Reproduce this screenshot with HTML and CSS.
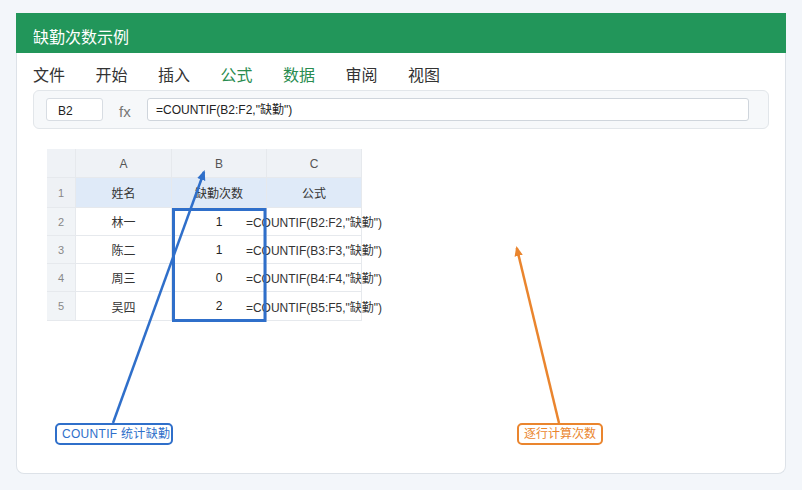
FILE: index.html
```html
<!DOCTYPE html>
<html lang="zh">
<head>
<meta charset="utf-8">
<title>缺勤次数示例</title>
<link rel="stylesheet" href="styles.css">
</head>
<body>
<div class="card">
  <div class="title">缺勤次数示例</div>
  <div class="menu">
    <span class="mi">文件</span>
    <span class="mi">开始</span>
    <span class="mi">插入</span>
    <span class="mi green">公式</span>
    <span class="mi green">数据</span>
    <span class="mi">审阅</span>
    <span class="mi">视图</span>
  </div>
  <div class="fbar">
    <div class="namebox">B2</div>
    <div class="fx">fx</div>
    <div class="finput">=COUNTIF(B2:F2,"缺勤")</div>
  </div>
  <div class="sheet">
    <div class="c corner"></div>
    <div class="c colh">A</div>
    <div class="c colh">B</div>
    <div class="c colh">C</div>

    <div class="c rowh r1">1</div>
    <div class="c hd">姓名</div>
    <div class="c hd">缺勤次数</div>
    <div class="c hd">公式</div>

    <div class="c rowh">2</div>
    <div class="c">林一</div>
    <div class="c num">1</div>
    <div class="c"><span class="nw">=COUNTIF(B2:F2,"缺勤")</span></div>

    <div class="c rowh">3</div>
    <div class="c">陈二</div>
    <div class="c num">1</div>
    <div class="c"><span class="nw">=COUNTIF(B3:F3,"缺勤")</span></div>

    <div class="c rowh">4</div>
    <div class="c">周三</div>
    <div class="c num">0</div>
    <div class="c"><span class="nw">=COUNTIF(B4:F4,"缺勤")</span></div>

    <div class="c rowh">5</div>
    <div class="c">吴四</div>
    <div class="c num">2</div>
    <div class="c"><span class="nw">=COUNTIF(B5:F5,"缺勤")</span></div>
  </div>
</div>

<svg class="overlay" width="802" height="490" viewBox="0 0 802 490">
  <defs>
    <marker id="ab" markerWidth="10" markerHeight="10" refX="8" refY="5" orient="auto" markerUnits="userSpaceOnUse">
      <path d="M0,0.8 L10,5 L0,9.2 Z" fill="#2f6fca"/>
    </marker>
    <marker id="ao" markerWidth="10" markerHeight="10" refX="8" refY="5" orient="auto" markerUnits="userSpaceOnUse">
      <path d="M0,0.8 L10,5 L0,9.2 Z" fill="#ea852e"/>
    </marker>
  </defs>
  <rect x="173.5" y="209.5" width="91.5" height="111" fill="none" stroke="#2f6fca" stroke-width="3"/>
  <line x1="113" y1="423" x2="204" y2="172" stroke="#2f6fca" stroke-width="2.5" marker-end="url(#ab)"/>
  <line x1="559" y1="423" x2="516.8" y2="248" stroke="#ea852e" stroke-width="2.5" marker-end="url(#ao)"/>
</svg>

<div class="callout blue">COUNTIF 统计缺勤</div>
<div class="callout orange">逐行计算次数</div>
</body>
</html>
```

FILE: styles.css
```css
* { box-sizing: border-box; }
html, body { margin: 0; padding: 0; }
body {
  position: relative;
  width: 802px;
  height: 490px;
  background: #f3f6fa;
  font-family: "Liberation Sans", "Noto Sans CJK SC", sans-serif;
  color: #222;
  overflow: hidden;
}
.card {
  margin: 13px 0 0 16px;
  width: 770px;
  height: 461px;
  background: #ffffff;
  border: 1px solid #dde2e8;
  border-top: none;
  border-radius: 0 0 8px 8px;
}
.title {
  margin: 0 -1px;
  height: 40px;
  padding: 7px 0 0 17px;
  line-height: 33px;
  background: #22965a;
  color: #ffffff;
  font-family: "Noto Sans CJK SC", sans-serif;
  font-size: 16px;
}
.menu {
  display: flex;
  gap: 30.5px;
  height: 37px;
  padding: 7px 0 0 16px;
  font-family: "Noto Sans CJK SC", sans-serif;
  font-size: 16px;
  line-height: 28px;
  color: #333;
}
.mi.green { color: #2a8c50; }
.fbar {
  display: flex;
  align-items: center;
  margin-left: 16px;
  width: 736px;
  height: 39px;
  padding: 0 19px 0 12px;
  background: #f6f8fa;
  border: 1px solid #e2e6ea;
  border-radius: 6px;
}
.namebox {
  width: 57px;
  height: 23px;
  padding: 2px 0 0 11px;
  line-height: 21px;
  font-size: 12px;
  background: #fff;
  border: 1px solid #d8dde3;
  border-radius: 3px;
  color: #222;
}
.fx {
  width: 44px;
  padding: 4px 0 0 16px;
  font-size: 15px;
  color: #777;
}
.finput {
  flex: 1;
  height: 23px;
  padding: 1px 0 0 8px;
  line-height: 21px;
  font-size: 12px;
  background: #fff;
  border: 1px solid #cfd5dc;
  border-radius: 3px;
  color: #222;
}
.sheet {
  display: grid;
  grid-template-columns: 29px 96px 95px 95px;
  grid-template-rows: 29px 30px 28px 28px 28px 29px;
  margin: 20px 0 0 30px;
  width: 315px;
}
.c {
  display: flex;
  align-items: center;
  justify-content: center;
  font-size: 12px;
  color: #333;
  background: #fff;
  border-right: 1px solid #e6e9ed;
  border-bottom: 1px solid #e6e9ed;
  white-space: nowrap;
}
.corner, .colh { background: #eff2f6; }
.colh { color: #555; font-size: 12px; padding-top: 1px; }
.rowh { background: #f1f4f7; color: #888; font-size: 11px; }
.rowh.r1 { background: #eef1f5; }
.hd { background: #dfeaf8; color: #333; }
.nw { white-space: nowrap; }
.num { color: #222; }
.overlay {
  position: absolute;
  left: 0;
  top: 0;
  pointer-events: none;
}
.callout {
  position: absolute;
  top: 423px;
  height: 22px;
  line-height: 18px;
  font-size: 12px;
  background: #fff;
  border: 2px solid;
  border-radius: 5px;
  white-space: nowrap;
}
.callout.blue {
  left: 55px;
  width: 118px;
  padding-left: 5px;
  color: #2f6fca;
  border-color: #2f6fca;
  letter-spacing: 0.3px;
}
.callout.orange {
  left: 517px;
  width: 86px;
  padding-left: 5px;
  color: #ea852e;
  border-color: #ea852e;
}
```
